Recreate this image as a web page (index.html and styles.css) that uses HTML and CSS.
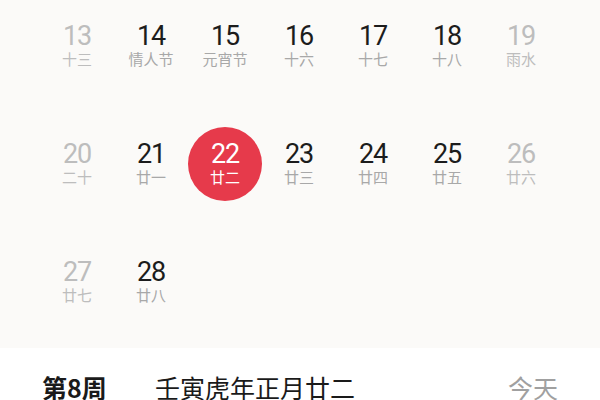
FILE: index.html
```html
<!DOCTYPE html>
<html lang="zh">
<head>
<meta charset="utf-8">
<link rel="stylesheet" href="styles.css">
</head>
<body>
<div class="calendar">
  <div class="grid">
    <div class="cell dim"><span class="num">13</span><span class="lunar">十三</span></div>
    <div class="cell"><span class="num">14</span><span class="lunar">情人节</span></div>
    <div class="cell"><span class="num">15</span><span class="lunar">元宵节</span></div>
    <div class="cell"><span class="num">16</span><span class="lunar">十六</span></div>
    <div class="cell"><span class="num">17</span><span class="lunar">十七</span></div>
    <div class="cell"><span class="num">18</span><span class="lunar">十八</span></div>
    <div class="cell dim"><span class="num">19</span><span class="lunar">雨水</span></div>

    <div class="cell dim"><span class="num">20</span><span class="lunar">二十</span></div>
    <div class="cell"><span class="num">21</span><span class="lunar">廿一</span></div>
    <div class="cell today"><span class="num">22</span><span class="lunar">廿二</span></div>
    <div class="cell"><span class="num">23</span><span class="lunar">廿三</span></div>
    <div class="cell"><span class="num">24</span><span class="lunar">廿四</span></div>
    <div class="cell"><span class="num">25</span><span class="lunar">廿五</span></div>
    <div class="cell dim"><span class="num">26</span><span class="lunar">廿六</span></div>

    <div class="cell dim"><span class="num">27</span><span class="lunar">廿七</span></div>
    <div class="cell"><span class="num">28</span><span class="lunar">廿八</span></div>
  </div>
</div>
<div class="footer">
  <span class="week">第8周</span>
  <span class="lunar-date">壬寅虎年正月廿二</span>
  <span class="today-btn">今天</span>
</div>
</body>
</html>
```
FILE: styles.css
```css
html, body {
  margin: 0;
  padding: 0;
}
body {
  width: 600px;
  height: 400px;
  overflow: hidden;
  background: #ffffff;
  font-family: "Noto Sans CJK SC", "Noto Sans", sans-serif;
}
.calendar {
  background: #fbfaf8;
  padding: 9px 0 29px 40px;
}
.grid {
  display: grid;
  grid-template-columns: repeat(7, 74px);
  grid-auto-rows: 74px;
  row-gap: 44px;
}
.cell {
  display: flex;
  flex-direction: column;
  align-items: center;
  justify-content: center;
  border-radius: 50%;
  color: #1c1c1c;
}
.num {
  display: block;
  font-family: "Roboto", sans-serif;
  font-size: 27px;
  letter-spacing: -1.2px;
  line-height: 26px;
}
.lunar {
  display: block;
  font-size: 15px;
  line-height: 20px;
  color: #a8a8a8;
}
.dim .num, .dim .lunar {
  color: #bdbdbd;
}
.today {
  background: #e63a4b;
}
.today .num, .today .lunar {
  color: #ffffff;
}
.footer {
  display: flex;
  align-items: center;
  padding: 24px 42px 0 42px;
  font-size: 25px;
  line-height: 30px;
  color: #1a1a1a;
}
.week {
  font-weight: bold;
  width: 113px;
}
.lunar-date {
  flex: 1;
}
.today-btn {
  color: #a0a0a0;
}
```
